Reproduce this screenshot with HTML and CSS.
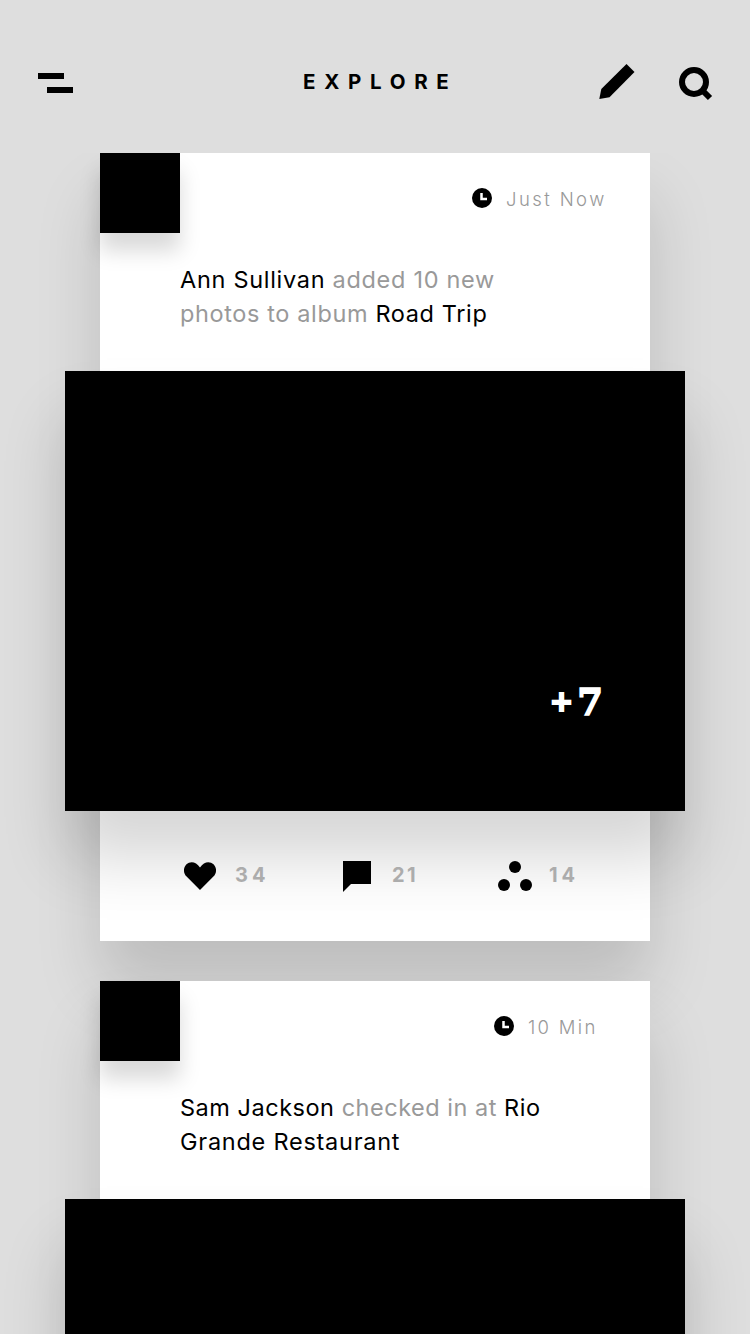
FILE: index.html
```html
<!DOCTYPE html>
<html lang="en">
<head>
<meta charset="utf-8">
<title>Explore</title>
<link rel="stylesheet" href="styles.css">
</head>
<body>
<header class="bar">
  <svg class="menu" width="35" height="20" viewBox="0 0 35 20"><path d="M0 0h26v6H0zM9 14h26v6H9z"/></svg>
  <h1 class="title">EXPLORE</h1>
  <div class="tools">
    <svg width="36" height="36" viewBox="0 0 36 36"><path d="M27.500 0 35.500 8 10.500 33.200 .3 35 2.300 25z"/></svg>
    <svg width="34" height="34" viewBox="0 0 34 34"><g fill="none" stroke="#000" stroke-width="6"><circle cx="15" cy="15" r="12"/><path d="M23 23 31 31"/></g></svg>
  </div>
</header>
<main class="feed">
  <article class="card">
    <div class="top">
      <div class="avatar"></div>
      <div class="time">
        <svg width="20" height="20" viewBox="0 0 20 20"><circle cx="10" cy="10" r="10"/><path d="M9.500 5v6H15" fill="none" stroke="#fff" stroke-width="2.500"/></svg>
        <span class="ago now">Just Now</span>
      </div>
    </div>
    <p class="text"><span class="line ann"><b>Ann Sullivan</b> added 10 new</span><span class="line album">photos to album <b>Road Trip</b></span></p>
    <div class="media"><span class="more"><span class="plus">+</span><span class="seven">7</span></span></div>
    <footer class="stats">
      <div class="stat"><svg width="32" height="28" viewBox="0 0 32 28"><path d="M16 28 2.600 14.600C-1 11-.8 5.500 2.500 2.300 6-1 12-.8 16 5.600 20-.8 26-1 29.500 2.300 32.800 5.500 33 11 29.400 14.600z"/></svg><span class="count">34</span></div>
      <div class="stat"><svg class="bubble" width="28" height="31" viewBox="0 0 28 31"><path d="M0 0h28v23H8L0 31z"/></svg><span class="count">21</span></div>
      <div class="stat"><svg class="dots" width="34" height="30" viewBox="0 0 34 30"><circle cx="17" cy="6" r="6"/><circle cx="6" cy="24" r="6"/><circle cx="28" cy="24" r="6"/></svg><span class="count">14</span></div>
    </footer>
  </article>
  <article class="card">
    <div class="top">
      <div class="avatar"></div>
      <div class="time later">
        <svg width="20" height="20" viewBox="0 0 20 20"><circle cx="10" cy="10" r="10"/><path d="M9.500 5v6H15" fill="none" stroke="#fff" stroke-width="2.500"/></svg>
        <span class="ago min">10 Min</span>
      </div>
    </div>
    <p class="text"><span class="line sam"><b>Sam Jackson</b> checked in at <b>Rio</b></span><span class="line grande"><b>Grande Restaurant</b></span></p>
    <div class="media"></div>
  </article>
</main>
</body>
</html>
```
FILE: styles.css
```css
* { box-sizing: border-box; }
body {
  margin: 0;
  width: 750px;
  height: 1334px;
  overflow: hidden;
  background: #dedede;
  color: #000;
  font-family: Inter, "Liberation Sans", sans-serif;
}
svg { display: block; flex: none; }
.bar {
  height: 153px;
  padding: 63px 37px 0 38px;
  display: grid;
  grid-template-columns: 265px 1fr auto;
  align-items: start;
}
.menu { margin-top: 10px; }
.title {
  margin: 5px 0 0;
  font-size: 20.500px;
  line-height: 27px;
  font-weight: 700;
  letter-spacing: 8.700px;
}
.tools { display: flex; gap: 44px; padding-top: 1px; }
.tools svg + svg { margin-top: 3px; }
.feed {
  display: flex;
  flex-direction: column;
  gap: 40px;
  height: 1181px;
  padding: 0 100px;
  overflow: hidden;
}
.card {
  flex: none;
  background: #fff;
  box-shadow: 0 45px 60px rgba(0, 0, 0, .15);
}
.top {
  display: flex;
  justify-content: space-between;
  height: 110px;
}
.avatar {
  width: 80px;
  height: 80px;
  background: #000;
  box-shadow: 0 18px 20px rgba(0, 0, 0, .15);
}
.time {
  display: flex;
  align-items: center;
  gap: 14px;
  width: 178px;
  height: 20px;
  margin-top: 35px;
}
.time.later { width: 156px; }
.ago {
  padding-top: 1px;
  font-size: 18.500px;
  line-height: 20px;
  font-weight: 300;
  color: #999;
  white-space: nowrap;
}
.now { letter-spacing: 2.400px; }
.min { letter-spacing: 2.300px; }
.text {
  margin: 0;
  height: 108px;
  padding-left: 80px;
  font-size: 23.500px;
  line-height: 34px;
  color: #999;
}
.text b { font-weight: 400; color: #000; }
.line { display: block; white-space: nowrap; }
.ann { letter-spacing: .7px; }
.album { letter-spacing: .62px; }
.sam { letter-spacing: .52px; }
.grande { letter-spacing: .75px; }
.media {
  height: 440px;
  margin: 0 -35px;
  padding: 0 82px 84px 0;
  background: #000;
  box-shadow: 0 48px 60px rgba(0, 0, 0, .16);
  display: flex;
  align-items: flex-end;
  justify-content: flex-end;
}
.more {
  display: flex;
  align-items: center;
  gap: 3px;
  color: #fff;
  font-family: "DejaVu Serif", serif;
  font-weight: 700;
  line-height: 50px;
}
.plus {
  font-family: "DejaVu Sans", sans-serif;
  font-size: 28px;
  margin-right: 1px;
  -webkit-text-stroke: 2px #fff;
}
.seven { font-size: 37px; -webkit-text-stroke: 1.500px #fff; }
.stats {
  height: 130px;
  padding: 50px 0 0 84px;
  display: grid;
  grid-template-columns: 159px 155px 1fr;
}
.stat { display: flex; align-items: flex-start; gap: 19px; height: 32px; }
.stat svg { margin-top: 1px; }
.stat .bubble { margin-top: 0; margin-right: 2px; }
.stat .dots { margin-top: 0; margin-right: -2px; }
.count {
  font-size: 20px;
  line-height: 28px;
  font-weight: 700;
  letter-spacing: 4px;
  color: #acacac;
}
.bubble + .count { letter-spacing: 2.500px; }
```
